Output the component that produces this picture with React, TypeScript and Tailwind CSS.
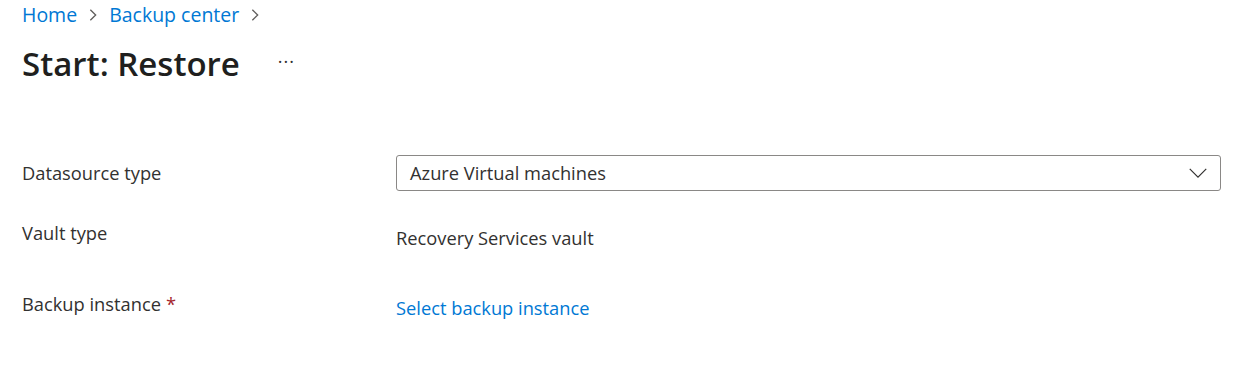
const font = { fontFamily: '"Segoe UI", "Open Sans", "Liberation Sans", sans-serif' };

function Chevron({ className }: { className?: string }) {
  return (
    <svg viewBox="0 0 12 12" className={className} fill="none" stroke="currentColor" strokeWidth="1">
      <path d="M4 2l4 4-4 4" />
    </svg>
  );
}

export default function App() {
  return (
    <div className="h-[387px] w-[1245px] bg-white text-[#323130]" style={font}>
      <div className="pl-[22px]">
        <nav className="flex h-[30px] items-center gap-[8px] text-[19.5px] text-[#0078d4]">
          <span>Home</span>
          <Chevron className="h-[16px] w-[16px] text-[#605e5c]" />
          <span>Backup center</span>
          <Chevron className="h-[16px] w-[16px] text-[#605e5c]" />
        </nav>
        <div className="flex h-[67px] items-center">
          <h1 className="text-[33px] font-semibold leading-none text-[#201f1e]">Start: Restore</h1>
          <span className="ml-[38px] mt-[-4px] text-[18px] tracking-[1px]">···</span>
        </div>
        <div className="mt-[58px] grid grid-cols-[374px_825px] text-[18.3px] leading-[26px]">
          <div className="flex h-[36px] items-center">Datasource type</div>
          <div className="flex h-[36px] items-center justify-between rounded-[3px] border border-[#8a8886] pl-[13px] pr-[12px]">
            <span>Azure Virtual machines</span>
            <svg viewBox="0 0 20 12" className="h-[11px] w-[20px]" fill="none" stroke="#323130" strokeWidth="1.3">
              <path d="M1 1l9 9 9-9" />
            </svg>
          </div>
          <div className="mt-[29px]">Vault type</div>
          <div className="mt-[29px] pt-[5px]">Recovery Services vault</div>
          <div className="mt-[40px]">
            Backup instance<span className="ml-[5px] text-[#a4262c]">*</span>
          </div>
          <div className="mt-[40px] pt-[4px] text-[#0078d4]">Select backup instance</div>
        </div>
      </div>
    </div>
  );
}
